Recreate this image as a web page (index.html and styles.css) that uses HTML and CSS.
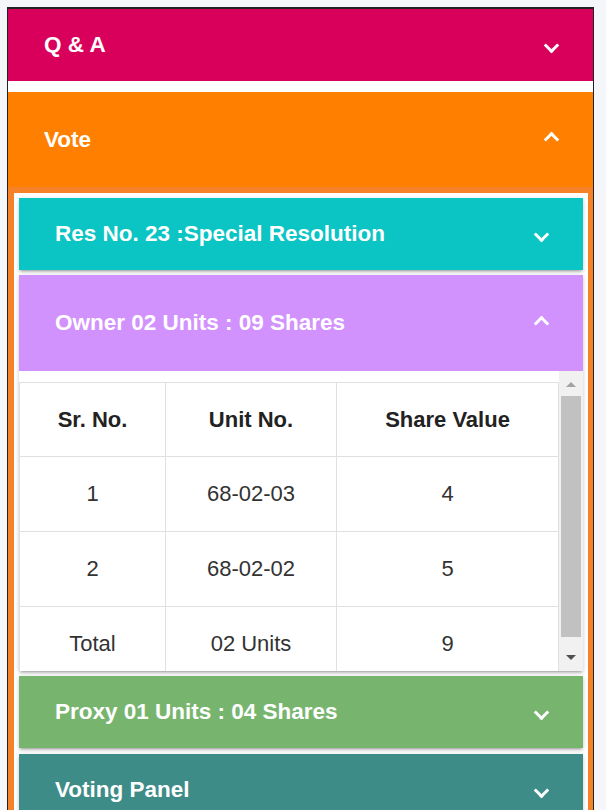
FILE: index.html
```html
<!DOCTYPE html>
<html lang="en">
<head>
<meta charset="utf-8">
<title>Vote</title>
<link rel="stylesheet" href="styles.css">
</head>
<body>
<div class="frame">
  <section class="panel qa">
    <div class="header"><span class="title">Q &amp; A</span><span class="chev"></span></div>
  </section>
  <section class="panel vote">
    <div class="header tall"><span class="title">Vote</span><span class="chev up"></span></div>
    <div class="vote-body">
      <div class="vote-inner">
        <section class="item res">
          <div class="header"><span class="title">Res No. 23 :Special Resolution</span><span class="chev"></span></div>
        </section>
        <section class="item owner">
          <div class="header tall2"><span class="title">Owner 02 Units : 09 Shares</span><span class="chev up"></span></div>
          <div class="table-area">
            <div class="table-scroll">
              <table>
                <colgroup><col class="c1"><col class="c2"><col></colgroup>
                <thead>
                  <tr><th>Sr. No.</th><th>Unit No.</th><th>Share Value</th></tr>
                </thead>
                <tbody>
                  <tr><td>1</td><td>68-02-03</td><td>4</td></tr>
                  <tr><td>2</td><td>68-02-02</td><td>5</td></tr>
                  <tr><td>Total</td><td>02 Units</td><td>9</td></tr>
                </tbody>
              </table>
            </div>
            <div class="scrollbar">
              <div class="sb-btn"><span class="tri-up"></span></div>
              <div class="sb-thumb"></div>
              <div class="sb-space"></div>
              <div class="sb-btn down"><span class="tri-down"></span></div>
            </div>
          </div>
        </section>
        <section class="item proxy">
          <div class="header"><span class="title">Proxy 01 Units : 04 Shares</span><span class="chev"></span></div>
        </section>
        <section class="item voting">
          <div class="header"><span class="title">Voting Panel</span><span class="chev"></span></div>
        </section>
      </div>
    </div>
  </section>
</div>
</body>
</html>
```

FILE: styles.css
```css
html, body {
  margin: 0;
  height: 100%;
  overflow: hidden;
  background: #f4f6f9;
  font-family: "Liberation Sans", Arial, sans-serif;
}

.frame {
  margin: 7px 12px 0 7px;
  border: 1px solid #222;
  border-top-width: 2px;
  border-bottom: 0;
  background: #fff;
}

.header {
  display: flex;
  align-items: center;
  justify-content: space-between;
  box-sizing: border-box;
  height: 72px;
  padding: 0 36px;
  color: #fff;
  font-size: 22.5px;
  font-weight: bold;
}

.header.tall { height: 95px; }
.header.tall2 { height: 96px; }

.chev {
  flex: none;
  box-sizing: border-box;
  width: 11px;
  height: 11px;
  border-right: 3px solid #fff;
  border-bottom: 3px solid #fff;
  transform: rotate(45deg);
}

.chev.up { transform: rotate(225deg); }

.qa { background: #d9005c; margin-bottom: 11px; }
.vote > .header { background: #ff8000; }

.vote-body {
  background: #f58229;
  padding: 6px 5px 0 6px;
}

.vote-inner {
  background: #fff;
  padding: 5px;
}

.item {
  margin-bottom: 5px;
  box-shadow: 0 3px 2px -2px rgba(0,0,0,.2), 0 2px 3px 0 rgba(0,0,0,.14), 0 1px 6px 0 rgba(0,0,0,.1);
}

.res .header { background: #0bc4c4; }
.owner .header { background: #d292fd; }
.proxy { margin-bottom: 6px; }
.proxy .header { background: #77b56f; }
.voting .header { background: #3e8c88; }

.table-area {
  display: flex;
  height: 300px;
  background: #fff;
}

.table-scroll {
  flex: 1;
  overflow: hidden;
  padding-top: 11px;
}

table {
  width: 100%;
  border-collapse: collapse;
  table-layout: fixed;
}

col.c1 { width: 146px; }
col.c2 { width: 171px; }

th, td {
  border: 1px solid #e0e0e0;
  text-align: center;
  padding: 0;
  font-size: 22px;
}

th {
  height: 73px;
  font-weight: bold;
  color: #222;
}

td {
  height: 74px;
  color: #333;
}

.scrollbar {
  flex: none;
  width: 24px;
  background: #f1f1f1;
  display: flex;
  flex-direction: column;
  align-items: center;
}

.sb-btn {
  height: 22px;
  margin-top: 2px;
  display: flex;
  align-items: center;
  justify-content: center;
}

.sb-btn.down {
  margin-top: 0;
  margin-bottom: 3px;
}

.tri-up {
  width: 0;
  height: 0;
  border-left: 5px solid transparent;
  border-right: 5px solid transparent;
  border-bottom: 5px solid #a3a3a3;
}

.tri-down {
  width: 0;
  height: 0;
  border-left: 5px solid transparent;
  border-right: 5px solid transparent;
  border-top: 5px solid #505050;
}

.sb-thumb {
  width: 20px;
  height: 241px;
  margin-top: 1px;
  background: #c1c1c1;
}

.sb-space { flex: 1; }
```
